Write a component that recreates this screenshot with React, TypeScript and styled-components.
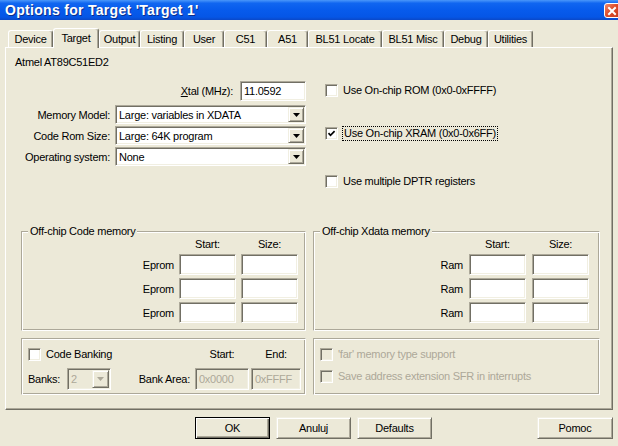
import React from "react";
import styled, { createGlobalStyle, css } from "styled-components";

const FACE = "#ece9d8";
const SHADOW = "#aca899";
const DARK = "#716f64";
const LIGHT = "#f1efe2";
const GRAYTEXT = "#aca899";

const GlobalStyle = createGlobalStyle`
  *, *::before, *::after { box-sizing: border-box; }
  html, body { margin: 0; padding: 0; background: ${FACE}; }
  body {
    font-family: "Liberation Sans", Arial, sans-serif;
    font-size: 11px;
    letter-spacing: -0.25px;
    color: #000;
  }
`;

/* 3D edge styles of the classic control set */
const sunken = css`
  border: 1px solid;
  border-color: ${SHADOW} #fff #fff ${SHADOW};
  box-shadow: inset 1px 1px 0 ${DARK}, inset -1px -1px 0 ${LIGHT};
`;

const raised = css`
  border: 1px solid;
  border-color: ${LIGHT} ${DARK} ${DARK} ${LIGHT};
  box-shadow: inset 1px 1px 0 #fff, inset -1px -1px 0 ${SHADOW};
`;

const etched = css`
  border: 1px solid;
  border-color: ${SHADOW} #fff #fff ${SHADOW};
  box-shadow: inset 1px 1px 0 #fff, inset -1px -1px 0 ${SHADOW};
`;

const Window = styled.div`
  width: 618px;
  height: 446px;
  overflow: hidden;
  background: ${FACE};
  display: flex;
  flex-direction: column;
`;

const TitleBar = styled.div`
  flex: none;
  height: 20px;
  display: flex;
  align-items: flex-start;
  justify-content: space-between;
  padding-left: 5px;
  overflow: hidden;
  background: linear-gradient(
    to bottom,
    #4a97fa 0%,
    #1066f0 16%,
    #075bec 50%,
    #0556e6 85%,
    #0a48c8 100%
  );
`;

const Title = styled.span`
  margin-top: 2px;
  color: #fff;
  font: bold 14px "Liberation Sans", Arial, sans-serif;
  letter-spacing: 0.3px;
  line-height: 16px;
  text-shadow: 1px 1px 0 #0b2f8c;
  white-space: nowrap;
`;

const CloseButton = styled.div`
  flex: none;
  width: 18px;
  height: 15px;
  margin-top: 3px;
  margin-right: -4px;
  border: 1px solid #fff;
  border-radius: 3px;
  background: linear-gradient(135deg, #ef8a6c 0%, #de4a2a 45%, #c23a1c 100%);
  display: flex;
  align-items: center;
  padding-left: 2px;
`;

const Body = styled.div`
  flex: 1;
  padding: 0 5px;
  display: flex;
  flex-direction: column;
`;

const TabStrip = styled.div`
  height: 27px;
  display: flex;
  align-items: flex-end;
  padding-left: 3px;
  position: relative;
  z-index: 1;
`;

const Tab = styled.div<{ $w: number; $active?: boolean }>`
  flex: none;
  width: ${(p) => p.$w}px;
  height: ${(p) => (p.$active ? 20 : 17)}px;
  margin-bottom: ${(p) => (p.$active ? -1 : 0)}px;
  padding-bottom: ${(p) => (p.$active ? 2 : 0)}px;
  display: flex;
  align-items: center;
  justify-content: center;
  background: ${FACE};
  border-top: 1px solid #fff;
  border-left: 1px solid #fff;
  border-right: 1px solid ${DARK};
  box-shadow: inset -1px 0 0 ${SHADOW};
  border-radius: 3px 3px 0 0;
  white-space: nowrap;
  position: relative;
  z-index: ${(p) => (p.$active ? 2 : 1)};
`;

const Panel = styled.div`
  position: relative;
  z-index: 0;
  height: 363px;
  border-top: 1px solid #fff;
  border-left: 1px solid #fff;
  border-right: 1px solid ${DARK};
  border-bottom: 1px solid ${DARK};
  box-shadow: inset -1px -1px 0 ${SHADOW};
  padding: 7px 0 0 9px;
  display: flex;
  flex-direction: column;
`;

const TopSection = styled.div`
  display: grid;
  grid-template-columns: 291px 1fr;
  column-gap: 19px;
  align-items: start;
`;

const Column = styled.div`
  display: flex;
  flex-direction: column;
`;

const DeviceName = styled.div`
  height: 14px;
  line-height: 14px;
`;

const XtalRow = styled.div`
  margin-top: 12px;
  height: 20px;
  display: flex;
  justify-content: flex-end;
  align-items: center;
  gap: 7px;
`;

const FieldRow = styled.div<{ $top: number }>`
  margin-top: ${(p) => p.$top}px;
  display: grid;
  grid-template-columns: 95px 191px;
  column-gap: 5px;
  align-items: center;
`;

const RightLabel = styled.span`
  text-align: right;
  white-space: nowrap;
`;

const TextBox = styled.div<{ $w?: number; $h?: number; $disabled?: boolean }>`
  ${sunken};
  width: ${(p) => (p.$w ? `${p.$w}px` : "auto")};
  height: ${(p) => p.$h ?? 21}px;
  background: ${(p) => (p.$disabled ? FACE : "#fff")};
  color: ${(p) => (p.$disabled ? GRAYTEXT : "#000")};
  padding-left: 3px;
  display: flex;
  align-items: center;
  white-space: nowrap;
`;

const Combo = styled.div<{ $h?: number; $disabled?: boolean }>`
  ${sunken};
  height: ${(p) => p.$h ?? 19}px;
  background: ${(p) => (p.$disabled ? FACE : "#fff")};
  color: ${(p) => (p.$disabled ? GRAYTEXT : "#000")};
  padding: 1px 1px 1px 3px;
  display: flex;
  align-items: stretch;
  white-space: nowrap;
`;

const ComboText = styled.span`
  flex: 1;
  display: flex;
  align-items: center;
  overflow: hidden;
`;

const DropButton = styled.span<{ $w?: number }>`
  ${raised};
  flex: none;
  width: ${(p) => p.$w ?? 16}px;
  background: ${FACE};
  display: flex;
  align-items: center;
  justify-content: center;
`;

const CheckRow = styled.label<{ $top?: number; $disabled?: boolean }>`
  margin-top: ${(p) => p.$top ?? 0}px;
  height: 14px;
  display: flex;
  align-items: center;
  gap: 5px;
  white-space: nowrap;
  color: ${(p) => (p.$disabled ? GRAYTEXT : "#000")};
`;

const CheckBox = styled.span<{ $disabled?: boolean }>`
  ${sunken};
  flex: none;
  width: 13px;
  height: 13px;
  background: ${(p) => (p.$disabled ? FACE : "#fff")};
  display: flex;
  align-items: center;
  justify-content: center;
`;

const FocusText = styled.span`
  outline: 1px dotted #000;
  padding: 0 1px;
  line-height: 13px;
`;

const GroupRow = styled.div<{ $top: number }>`
  margin-top: ${(p) => p.$top}px;
  margin-left: 6px;
  display: grid;
  grid-template-columns: 285px 287px;
  column-gap: 7px;
`;

const Group = styled.fieldset<{ $pr?: number }>`
  ${etched};
  margin: 0;
  min-width: 0;
  padding: 0 ${(p) => p.$pr ?? 7}px 7px 0;
`;

const Legend = styled.legend`
  margin-left: 6px;
  padding: 0 2px;
  line-height: 14px;
  background: ${FACE};
`;

const MemGrid = styled.div<{ $gap: number }>`
  display: grid;
  grid-template-columns: 1fr 57px 57px;
  grid-template-rows: 13px repeat(3, 21px);
  column-gap: ${(p) => p.$gap}px;
  row-gap: 3px;
  align-items: center;
`;

const ColHead = styled.span`
  text-align: center;
  line-height: 13px;
`;

const PlainGroup = styled.fieldset`
  ${etched};
  margin: 0;
  min-width: 0;
  padding: 8px 4px 4px 6px;
`;

const BankGrid = styled.div`
  display: grid;
  grid-template-columns: 37px 44px 1fr 54px 50px;
  grid-template-rows: 14px 22px;
  column-gap: 2px;
  row-gap: 7px;
  align-items: center;
`;

const SpanCell = styled.div`
  grid-column: 1 / 4;
`;

const AreaLabel = styled.span`
  text-align: right;
  padding-right: 3px;
  white-space: nowrap;
`;

const FarList = styled.div`
  display: flex;
  flex-direction: column;
  gap: 8px;
`;

const ButtonRow = styled.div`
  margin-top: 7px;
  padding-left: 190px;
  display: flex;
  gap: 6px;
`;

const Button = styled.button<{ $default?: boolean; $w?: number; $push?: boolean }>`
  ${raised};
  width: ${(p) => p.$w ?? 75}px;
  height: 22px;
  padding: 0;
  margin-left: ${(p) => (p.$push ? "auto" : "0")};
  font: inherit;
  letter-spacing: inherit;
  color: #000;
  background: ${FACE};
  ${(p) =>
    p.$default &&
    css`
      border-color: #000;
      box-shadow: inset 1px 1px 0 #fff, inset -1px -1px 0 ${DARK},
        inset -2px -2px 0 ${SHADOW};
    `}
`;

const CloseGlyph = () => (
  <svg width="10" height="10" viewBox="0 0 10 10">
    <path d="M2 2 L8 8 M8 2 L2 8" stroke="#fff" strokeWidth="2" strokeLinecap="square" />
  </svg>
);

const Arrow = ({ color = "#000" }: { color?: string }) => (
  <svg width="7" height="4" viewBox="0 0 7 4">
    <path d="M0 0h7L3.5 4z" fill={color} />
  </svg>
);

const Tick = () => (
  <svg width="9" height="9" viewBox="0 0 9 9">
    <path d="M1.5 4.2 L3.5 6.3 L7.6 2.2" fill="none" stroke="#000" strokeWidth="1.7" />
  </svg>
);

const tabs: { label: string; w: number; active?: boolean }[] = [
  { label: "Device", w: 45 },
  { label: "Target", w: 46, active: true },
  { label: "Output", w: 41 },
  { label: "Listing", w: 44 },
  { label: "User", w: 40 },
  { label: "C51", w: 43 },
  { label: "A51", w: 41 },
  { label: "BL51 Locate", w: 74 },
  { label: "BL51 Misc", w: 62 },
  { label: "Debug", w: 44 },
  { label: "Utilities", w: 45 },
];

const selects = [
  { label: "Memory Model:", value: "Large: variables in XDATA", top: 4 },
  { label: "Code Rom Size:", value: "Large: 64K program", top: 2 },
  { label: "Operating system:", value: "None", top: 2 },
];

function MemoryGroup({
  title,
  rowLabel,
  gap,
  pr,
}: {
  title: string;
  rowLabel: string;
  gap: number;
  pr: number;
}) {
  return (
    <Group $pr={pr}>
      <Legend>{title}</Legend>
      <MemGrid $gap={gap}>
        <span />
        <ColHead>Start:</ColHead>
        <ColHead>Size:</ColHead>
        {[0, 1, 2].map((i) => (
          <React.Fragment key={i}>
            <RightLabel>{rowLabel}</RightLabel>
            <TextBox />
            <TextBox />
          </React.Fragment>
        ))}
      </MemGrid>
    </Group>
  );
}

export default function App() {
  return (
    <>
      <GlobalStyle />
      <Window>
        <TitleBar>
          <Title>Options for Target 'Target 1'</Title>
          <CloseButton>
            <CloseGlyph />
          </CloseButton>
        </TitleBar>
        <Body>
          <TabStrip>
            {tabs.map((t) => (
              <Tab key={t.label} $w={t.w} $active={t.active}>
                {t.label}
              </Tab>
            ))}
          </TabStrip>
          <Panel>
            <TopSection>
              <Column>
                <DeviceName>Atmel AT89C51ED2</DeviceName>
                <XtalRow>
                  <span>
                    <u>X</u>tal (MHz):
                  </span>
                  <TextBox $w={66} $h={20}>
                    11.0592
                  </TextBox>
                </XtalRow>
                {selects.map((s) => (
                  <FieldRow key={s.label} $top={s.top}>
                    <RightLabel>{s.label}</RightLabel>
                    <Combo>
                      <ComboText>{s.value}</ComboText>
                      <DropButton>
                        <Arrow />
                      </DropButton>
                    </Combo>
                  </FieldRow>
                ))}
              </Column>
              <Column>
                <CheckRow $top={28}>
                  <CheckBox />
                  <span>Use On-chip ROM (0x0-0xFFFF)</span>
                </CheckRow>
                <CheckRow $top={29}>
                  <CheckBox>
                    <Tick />
                  </CheckBox>
                  <FocusText>Use On-chip XRAM (0x0-0x6FF)</FocusText>
                </CheckRow>
                <CheckRow $top={34}>
                  <CheckBox />
                  <span>Use multiple DPTR registers</span>
                </CheckRow>
              </Column>
            </TopSection>

            <GroupRow $top={36}>
              <MemoryGroup title="Off-chip Code memory" rowLabel="Eprom" gap={5} pr={7} />
              <MemoryGroup title="Off-chip Xdata memory" rowLabel="Ram" gap={6} pr={10} />
            </GroupRow>

            <GroupRow $top={7}>
              <PlainGroup>
                <BankGrid>
                  <SpanCell>
                    <CheckRow>
                      <CheckBox />
                      <span>Code Banking</span>
                    </CheckRow>
                  </SpanCell>
                  <ColHead>Start:</ColHead>
                  <ColHead>End:</ColHead>
                  <span>Banks:</span>
                  <Combo $h={22} $disabled>
                    <ComboText>2</ComboText>
                    <DropButton $w={17}>
                      <Arrow color={GRAYTEXT} />
                    </DropButton>
                  </Combo>
                  <AreaLabel>Bank Area:</AreaLabel>
                  <TextBox $h={22} $disabled>
                    0x0000
                  </TextBox>
                  <TextBox $h={22} $disabled>
                    0xFFFF
                  </TextBox>
                </BankGrid>
              </PlainGroup>
              <PlainGroup>
                <FarList>
                  <CheckRow $disabled>
                    <CheckBox $disabled />
                    <span>'far' memory type support</span>
                  </CheckRow>
                  <CheckRow $disabled>
                    <CheckBox $disabled />
                    <span>Save address extension SFR in interrupts</span>
                  </CheckRow>
                </FarList>
              </PlainGroup>
            </GroupRow>
          </Panel>

          <ButtonRow>
            <Button $default>OK</Button>
            <Button>Anuluj</Button>
            <Button>Defaults</Button>
            <Button $push $w={76}>
              Pomoc
            </Button>
          </ButtonRow>
        </Body>
      </Window>
    </>
  );
}
